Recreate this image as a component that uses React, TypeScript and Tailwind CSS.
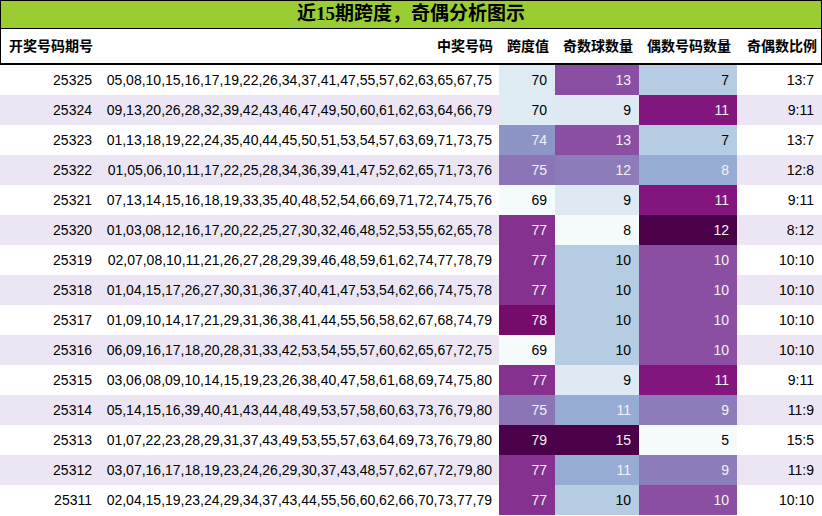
const rows: [string, string, number, number, number, string][] = [
  ['25325', '05,08,10,15,16,17,19,22,26,34,37,41,47,55,57,62,63,65,67,75', 70, 13, 7, '13:7'],
  ['25324', '09,13,20,26,28,32,39,42,43,46,47,49,50,60,61,62,63,64,66,79', 70, 9, 11, '9:11'],
  ['25323', '01,13,18,19,22,24,35,40,44,45,50,51,53,54,57,63,69,71,73,75', 74, 13, 7, '13:7'],
  ['25322', '01,05,06,10,11,17,22,25,28,34,36,39,41,47,52,62,65,71,73,76', 75, 12, 8, '12:8'],
  ['25321', '07,13,14,15,16,18,19,33,35,40,48,52,54,66,69,71,72,74,75,76', 69, 9, 11, '9:11'],
  ['25320', '01,03,08,12,16,17,20,22,25,27,30,32,46,48,52,53,55,62,65,78', 77, 8, 12, '8:12'],
  ['25319', '02,07,08,10,11,21,26,27,28,29,39,46,48,59,61,62,74,77,78,79', 77, 10, 10, '10:10'],
  ['25318', '01,04,15,17,26,27,30,31,36,37,40,41,47,53,54,62,66,74,75,78', 77, 10, 10, '10:10'],
  ['25317', '01,09,10,14,17,21,29,31,36,38,41,44,55,56,58,62,67,68,74,79', 78, 10, 10, '10:10'],
  ['25316', '06,09,16,17,18,20,28,31,33,42,53,54,55,57,60,62,65,67,72,75', 69, 10, 10, '10:10'],
  ['25315', '03,06,08,09,10,14,15,19,23,26,38,40,47,58,61,68,69,74,75,80', 77, 9, 11, '9:11'],
  ['25314', '05,14,15,16,39,40,41,43,44,48,49,53,57,58,60,63,73,76,79,80', 75, 11, 9, '11:9'],
  ['25313', '01,07,22,23,28,29,31,37,43,49,53,55,57,63,64,69,73,76,79,80', 79, 15, 5, '15:5'],
  ['25312', '03,07,16,17,18,19,23,24,26,29,30,37,43,48,57,62,67,72,79,80', 77, 11, 9, '11:9'],
  ['25311', '02,04,15,19,23,24,29,34,37,43,44,55,56,60,62,66,70,73,77,79', 77, 10, 10, '10:10'],
];

const span: Record<number, string> = {
  69: 'bg-[#f5fbfc] text-black',
  70: 'bg-[#deebf3] text-black',
  74: 'bg-[#8c95c6] text-[#f2f2f2]',
  75: 'bg-[#8c75b7] text-[#f2f2f2]',
  77: 'bg-[#86308f] text-[#f2f2f2]',
  78: 'bg-[#770b6c] text-[#f2f2f2]',
  79: 'bg-[#4b004a] text-[#f2f2f2]',
};

const odd: Record<number, string> = {
  8: 'bg-[#f5fbfc] text-black',
  9: 'bg-[#dee9f3] text-black',
  10: 'bg-[#b5cce3] text-black',
  11: 'bg-[#96acd5] text-[#f2f2f2]',
  12: 'bg-[#8c7cba] text-[#f2f2f2]',
  13: 'bg-[#8a4fa3] text-[#f2f2f2]',
  15: 'bg-[#4b004a] text-[#f2f2f2]',
};

const even: Record<number, string> = {
  5: 'bg-[#f5fbfc] text-black',
  7: 'bg-[#b5cce3] text-black',
  8: 'bg-[#96acd5] text-[#f2f2f2]',
  9: 'bg-[#8c7cba] text-[#f2f2f2]',
  10: 'bg-[#8a4fa3] text-[#f2f2f2]',
  11: 'bg-[#83167e] text-[#f2f2f2]',
  12: 'bg-[#4b004a] text-[#f2f2f2]',
};

const cols = 'grid grid-cols-[100px_399px_56px_84px_98px_85px]';

export default function App() {
  return (
    <div className="w-[822px] h-[516px] bg-white text-black text-[14px] font-['Liberation_Sans','Noto_Sans_CJK_SC',sans-serif] overflow-hidden">
      <div className="h-[29px] bg-[#9acd32] border border-black flex items-center justify-center text-[19px] font-bold font-['Liberation_Serif','Noto_Sans_CJK_SC',serif]">
        近15期跨度，奇偶分析图示
      </div>
      <div className={`${cols} h-[36px] items-center font-bold border-l border-r border-black border-b-2`}>
        <div className="pl-[8px]">开奖号码期号</div>
        <div className="text-right pr-[7px]">中奖号码</div>
        <div className="text-right pr-[7px]">跨度值</div>
        <div className="text-right pr-[7px]">奇数球数量</div>
        <div className="text-right pr-[7px]">偶数号码数量</div>
        <div className="text-right pr-[6px]">奇偶数比例</div>
      </div>
      {rows.map(([id, nums, s, o, e, ratio], i) => (
        <div key={id} className={`${cols} h-[30px] ${i % 2 === 1 ? 'bg-[#ece6f4]' : 'bg-white'}`}>
          <div className="flex items-center justify-end pr-[8px]">{id}</div>
          <div className="flex items-center justify-end pr-[7px]">{nums}</div>
          <div className={`flex items-center justify-end pr-[8px] ${span[s]}`}>{s}</div>
          <div className={`flex items-center justify-end pr-[8px] ${odd[o]}`}>{o}</div>
          <div className={`flex items-center justify-end pr-[8px] ${even[e]}`}>{e}</div>
          <div className="flex items-center justify-end pr-[8px]">{ratio}</div>
        </div>
      ))}
    </div>
  );
}
